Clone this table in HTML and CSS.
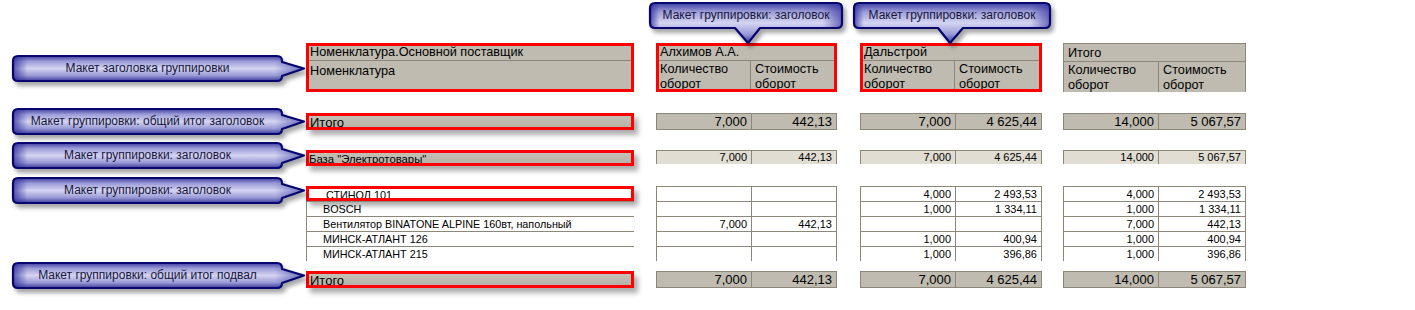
FILE: index.html
```html
<!DOCTYPE html>
<html lang="ru">
<head>
<meta charset="utf-8">
<title>Макеты группировок</title>
<link rel="stylesheet" href="styles.css">
</head>
<body>
<div class="page">
  <div class="report">
    <div class="band band-head">
      <div class="blk left head hl">
        <div class="h1">Номенклатура.Основной поставщик</div>
        <div class="h2 pad">Номенклатура</div>
      </div>
      <div class="blk g1 head hl">
        <div class="h1">Алхимов А.А.</div>
        <div class="h2 split"><div class="c">Количество<br>оборот</div><div class="c">Стоимость<br>оборот</div></div>
      </div>
      <div class="blk g2 head hl">
        <div class="h1">Дальстрой</div>
        <div class="h2 split"><div class="c">Количество<br>оборот</div><div class="c">Стоимость<br>оборот</div></div>
      </div>
      <div class="blk g3 head framed">
        <div class="h1">Итого</div>
        <div class="h2 split"><div class="c">Количество<br>оборот</div><div class="c">Стоимость<br>оборот</div></div>
      </div>
    </div>

    <div class="band band-total first">
      <div class="blk left tot-left hl">Итого</div>
      <div class="blk g1 vrow tot"><div class="v">7,000</div><div class="v">442,13</div></div>
      <div class="blk g2 vrow tot"><div class="v">7,000</div><div class="v">4 625,44</div></div>
      <div class="blk g3 vrow tot"><div class="v">14,000</div><div class="v">5 067,57</div></div>
    </div>

    <div class="band band-group">
      <div class="blk left grp-left hl">База "Электротовары"</div>
      <div class="blk g1 vrow grp"><div class="v">7,000</div><div class="v">442,13</div></div>
      <div class="blk g2 vrow grp"><div class="v">7,000</div><div class="v">4 625,44</div></div>
      <div class="blk g3 vrow grp"><div class="v">14,000</div><div class="v">5 067,57</div></div>
    </div>

    <div class="band band-detail">
      <div class="blk left dleft">
        <div class="lrow hl first-item">  СТИНОЛ 101</div>
        <div class="lrow">BOSCH</div>
        <div class="lrow">Вентилятор BINATONE ALPINE 160вт, напольный</div>
        <div class="lrow">МИНСК-АТЛАНТ 126</div>
        <div class="lrow">МИНСК-АТЛАНТ 215</div>
      </div>
      <div class="blk g1 dgrid">
        <div class="drow"><div class="v"></div><div class="v"></div></div>
        <div class="drow"><div class="v"></div><div class="v"></div></div>
        <div class="drow"><div class="v">7,000</div><div class="v">442,13</div></div>
        <div class="drow"><div class="v"></div><div class="v"></div></div>
        <div class="drow"><div class="v"></div><div class="v"></div></div>
      </div>
      <div class="blk g2 dgrid">
        <div class="drow"><div class="v">4,000</div><div class="v">2 493,53</div></div>
        <div class="drow"><div class="v">1,000</div><div class="v">1 334,11</div></div>
        <div class="drow"><div class="v"></div><div class="v"></div></div>
        <div class="drow"><div class="v">1,000</div><div class="v">400,94</div></div>
        <div class="drow"><div class="v">1,000</div><div class="v">396,86</div></div>
      </div>
      <div class="blk g3 dgrid">
        <div class="drow"><div class="v">4,000</div><div class="v">2 493,53</div></div>
        <div class="drow"><div class="v">1,000</div><div class="v">1 334,11</div></div>
        <div class="drow"><div class="v">7,000</div><div class="v">442,13</div></div>
        <div class="drow"><div class="v">1,000</div><div class="v">400,94</div></div>
        <div class="drow"><div class="v">1,000</div><div class="v">396,86</div></div>
      </div>
    </div>

    <div class="band band-footer">
      <div class="blk left tot-left hl">Итого</div>
      <div class="blk g1 vrow tot"><div class="v">7,000</div><div class="v">442,13</div></div>
      <div class="blk g2 vrow tot"><div class="v">7,000</div><div class="v">4 625,44</div></div>
      <div class="blk g3 vrow tot"><div class="v">14,000</div><div class="v">5 067,57</div></div>
    </div>
  </div>

  <!-- annotation callouts -->
  <div class="callout side c-head">
    <svg class="shape" width="300" height="34" viewBox="0 0 300 34">
      <path class="body" d="M6,1 H265 Q270,1 270,6 V7 L292,13.5 L270,21 V21 Q270,26 265,26 H6 Q1,26 1,21 V6 Q1,1 6,1 Z"/>
      <path class="edge" d="M6,1 H265 Q270,1 270,6 V7 L292,13.5 L270,21 V21 Q270,26 265,26 H6 Q1,26 1,21 V6 Q1,1 6,1 Z"/>
    </svg>
    <span class="label">Макет заголовка группировки</span>
  </div>
  <div class="callout side c-tot">
    <svg class="shape" width="300" height="34" viewBox="0 0 300 34">
      <path class="body" d="M6,1 H265 Q270,1 270,6 V7 L292,13.5 L270,21 V21 Q270,26 265,26 H6 Q1,26 1,21 V6 Q1,1 6,1 Z"/>
      <path class="edge" d="M6,1 H265 Q270,1 270,6 V7 L292,13.5 L270,21 V21 Q270,26 265,26 H6 Q1,26 1,21 V6 Q1,1 6,1 Z"/>
    </svg>
    <span class="label">Макет группировки: общий итог заголовок</span>
  </div>
  <div class="callout side c-grp1">
    <svg class="shape" width="300" height="34" viewBox="0 0 300 34">
      <path class="body" d="M6,1 H265 Q270,1 270,6 V7 L292,13.5 L270,21 V21 Q270,26 265,26 H6 Q1,26 1,21 V6 Q1,1 6,1 Z"/>
      <path class="edge" d="M6,1 H265 Q270,1 270,6 V7 L292,13.5 L270,21 V21 Q270,26 265,26 H6 Q1,26 1,21 V6 Q1,1 6,1 Z"/>
    </svg>
    <span class="label">Макет группировки: заголовок</span>
  </div>
  <div class="callout side c-grp2">
    <svg class="shape" width="300" height="34" viewBox="0 0 300 34">
      <path class="body" d="M6,1 H265 Q270,1 270,6 V7 L292,13.5 L270,21 V21 Q270,26 265,26 H6 Q1,26 1,21 V6 Q1,1 6,1 Z"/>
      <path class="edge" d="M6,1 H265 Q270,1 270,6 V7 L292,13.5 L270,21 V21 Q270,26 265,26 H6 Q1,26 1,21 V6 Q1,1 6,1 Z"/>
    </svg>
    <span class="label">Макет группировки: заголовок</span>
  </div>
  <div class="callout side c-foot">
    <svg class="shape" width="300" height="34" viewBox="0 0 300 34">
      <path class="body" d="M6,1 H265 Q270,1 270,6 V7 L292,13.5 L270,21 V21 Q270,26 265,26 H6 Q1,26 1,21 V6 Q1,1 6,1 Z"/>
      <path class="edge" d="M6,1 H265 Q270,1 270,6 V7 L292,13.5 L270,21 V21 Q270,26 265,26 H6 Q1,26 1,21 V6 Q1,1 6,1 Z"/>
    </svg>
    <span class="label">Макет группировки: общий итог подвал</span>
  </div>

  <div class="callout top c-top1">
    <svg class="shape" width="202" height="48" viewBox="0 0 202 48">
      <path class="body" d="M6,1 H188 Q193,1 193,6 V21 Q193,26 188,26 H111 L99,41 L86,26 H6 Q1,26 1,21 V6 Q1,1 6,1 Z"/>
      <path class="edge" d="M6,1 H188 Q193,1 193,6 V21 Q193,26 188,26 H111 L99,41 L86,26 H6 Q1,26 1,21 V6 Q1,1 6,1 Z"/>
    </svg>
    <span class="label">Макет группировки: заголовок</span>
  </div>
  <div class="callout top c-top2">
    <svg class="shape" width="206" height="48" viewBox="0 0 206 48">
      <path class="body" d="M6,1 H192 Q197,1 197,6 V21 Q197,26 192,26 H110 L97,41 L85,26 H6 Q1,26 1,21 V6 Q1,1 6,1 Z"/>
      <path class="edge" d="M6,1 H192 Q197,1 197,6 V21 Q197,26 192,26 H110 L97,41 L85,26 H6 Q1,26 1,21 V6 Q1,1 6,1 Z"/>
    </svg>
    <span class="label">Макет группировки: заголовок</span>
  </div>

  <svg class="defs" width="0" height="0" aria-hidden="true">
    <defs>
      <linearGradient id="gv" x1="0" y1="0" x2="0" y2="1">
        <stop offset="0" stop-color="#3e3ea2"/>
        <stop offset="0.22" stop-color="#9c9cd8"/>
        <stop offset="0.5" stop-color="#d4d4f2"/>
        <stop offset="0.78" stop-color="#9a9ad6"/>
        <stop offset="1" stop-color="#3a3a9e"/>
      </linearGradient>
      <linearGradient id="gh" x1="0" y1="0" x2="1" y2="0">
        <stop offset="0" stop-color="#30309c" stop-opacity="0.8"/>
        <stop offset="0.05" stop-color="#30309c" stop-opacity="0"/>
        <stop offset="0.9" stop-color="#30309c" stop-opacity="0"/>
        <stop offset="1" stop-color="#30309c" stop-opacity="0.65"/>
      </linearGradient>
    </defs>
  </svg>
</div>
</body>
</html>
```

FILE: styles.css
```css
* { box-sizing: border-box; margin: 0; padding: 0; }

body {
  margin: 0;
  background: #ffffff;
  font-family: "Liberation Sans", Arial, sans-serif;
  color: #000;
}

.page {
  position: relative;
  width: 1415px;
  height: 310px;
  overflow: hidden;
}

/* ---------- report grid ---------- */
.report {
  display: flex;
  flex-direction: column;
  padding: 43px 0 0 306px;
}

.band { display: flex; align-items: flex-start; }
.band-total { margin-top: 21px; }
.band-group { margin-top: 20px; }
.band-detail { margin-top: 20px; }
.band-footer { margin-top: 10px; }

.blk { position: relative; flex: none; }
.left { width: 328px; }
.g1 { margin-left: 22px; width: 181px; }
.g2 { margin-left: 23px; width: 182px; }
.g3 { margin-left: 21px; width: 183px; }

/* red highlight frame drawn over the template area */
.hl::after {
  content: "";
  position: absolute;
  inset: 0;
  border: 3px solid #ff0000;
  box-shadow: 4px 5px 5px rgba(40, 40, 40, 0.38);
  pointer-events: none;
}

/* ---------- header ---------- */
.head {
  height: 49px;
  background: #bfbbb0;
  font-size: 12.7px;
  line-height: 15px;
  overflow: hidden;
}
.framed {
  border: 1px solid #8c8778;
  border-bottom: none;
}
.h1 {
  height: 18px;
  padding: 2px 0 0 4px;
  border-bottom: 1px solid #8c8778;
  white-space: nowrap;
}
.h2 { height: 31px; }
.pad { padding: 3px 0 0 4px; }
.split { display: flex; }
.split .c {
  padding: 1px 0 0 4px;
  height: 31px;
  overflow: hidden;
}
.split .c:first-child {
  width: 95px;
  border-right: 1px solid #8c8778;
}
.split .c:last-child { flex: 1; }

/* ---------- value rows ---------- */
.vrow { display: flex; }
.vrow .v,
.drow .v {
  text-align: right;
  padding-right: 4px;
  white-space: nowrap;
}
.vrow .v:first-child,
.drow .v:first-child { width: 95px; }
.vrow .v:last-child,
.drow .v:last-child { flex: 1; }

.tot {
  height: 17px;
  background: #bfbbb0;
  border-top: 1px solid #8c8778;
  border-bottom: 1px solid #8c8778;
  font-size: 13px;
  line-height: 15px;
}
.tot .v { border-left: 1px solid #8c8778; }
.tot .v:last-child { border-right: 1px solid #8c8778; }

.grp {
  height: 14px;
  background: #e1ddd3;
  border-top: 1px solid #8c8778;
  font-size: 11px;
  line-height: 13px;
}
.grp .v { border-left: 1px solid #8c8778; }
.grp .v:last-child { border-right: 1px solid #8c8778; }

.tot-left {
  height: 17px;
  background: linear-gradient(#c7c4ba, #b3afa3);
  font-size: 13px;
  line-height: 17px;
  padding-left: 4px;
  padding-top: 1px;
}
.grp-left {
  height: 16px;
  background: linear-gradient(#c7c4ba, #b3afa3);
  font-size: 11.3px;
  line-height: 14px;
  padding: 2px 0 0 3px;
}

/* ---------- detail rows ---------- */
.dleft { border-left: 1px solid #8c8778; }
.lrow {
  position: relative;
  height: 15px;
  border-top: 1px solid #8c8778;
  font-size: 10.8px;
  line-height: 14px;
  padding-left: 16px;
  white-space: pre;
}
.lrow:first-child { border-top-color: transparent; }
.first-item { margin-left: -1px; height: 16px; margin-top: -1px; padding-left: 14px; padding-top: 2px; }

.drow {
  display: flex;
  height: 15px;
  border-top: 1px solid #8c8778;
  font-size: 11px;
  line-height: 14px;
}
.drow .v { border-left: 1px solid #8c8778; }
.drow .v:last-child { border-right: 1px solid #8c8778; }

/* ---------- callouts (annotation overlays) ---------- */
.callout {
  position: absolute;
}
.callout .shape {
  display: block;
  overflow: visible;
  filter: drop-shadow(3px 4px 2px rgba(0, 0, 0, 0.35));
}
.callout .body { fill: url(#gv); }
.callout .edge {
  fill: url(#gh);
  stroke: #06066e;
  stroke-width: 2.2;
  stroke-linejoin: round;
}
.callout .label {
  position: absolute;
  top: 0;
  left: 0;
  height: 27px;
  line-height: 26px;
  text-align: center;
  font-size: 12px;
  color: #16163a;
  white-space: nowrap;
}

.side .label { width: 271px; }
.c-head { left: 12px; top: 55px; }
.c-tot  { left: 12px; top: 108px; }
.c-grp1 { left: 12px; top: 142px; }
.c-grp2 { left: 12px; top: 177px; }
.c-foot { left: 12px; top: 262px; }

.c-top1 { left: 649px; top: 2px; }
.c-top1 .label { width: 194px; }
.c-top2 { left: 853px; top: 2px; }
.c-top2 .label { width: 198px; }

.defs { position: absolute; width: 0; height: 0; }
```
